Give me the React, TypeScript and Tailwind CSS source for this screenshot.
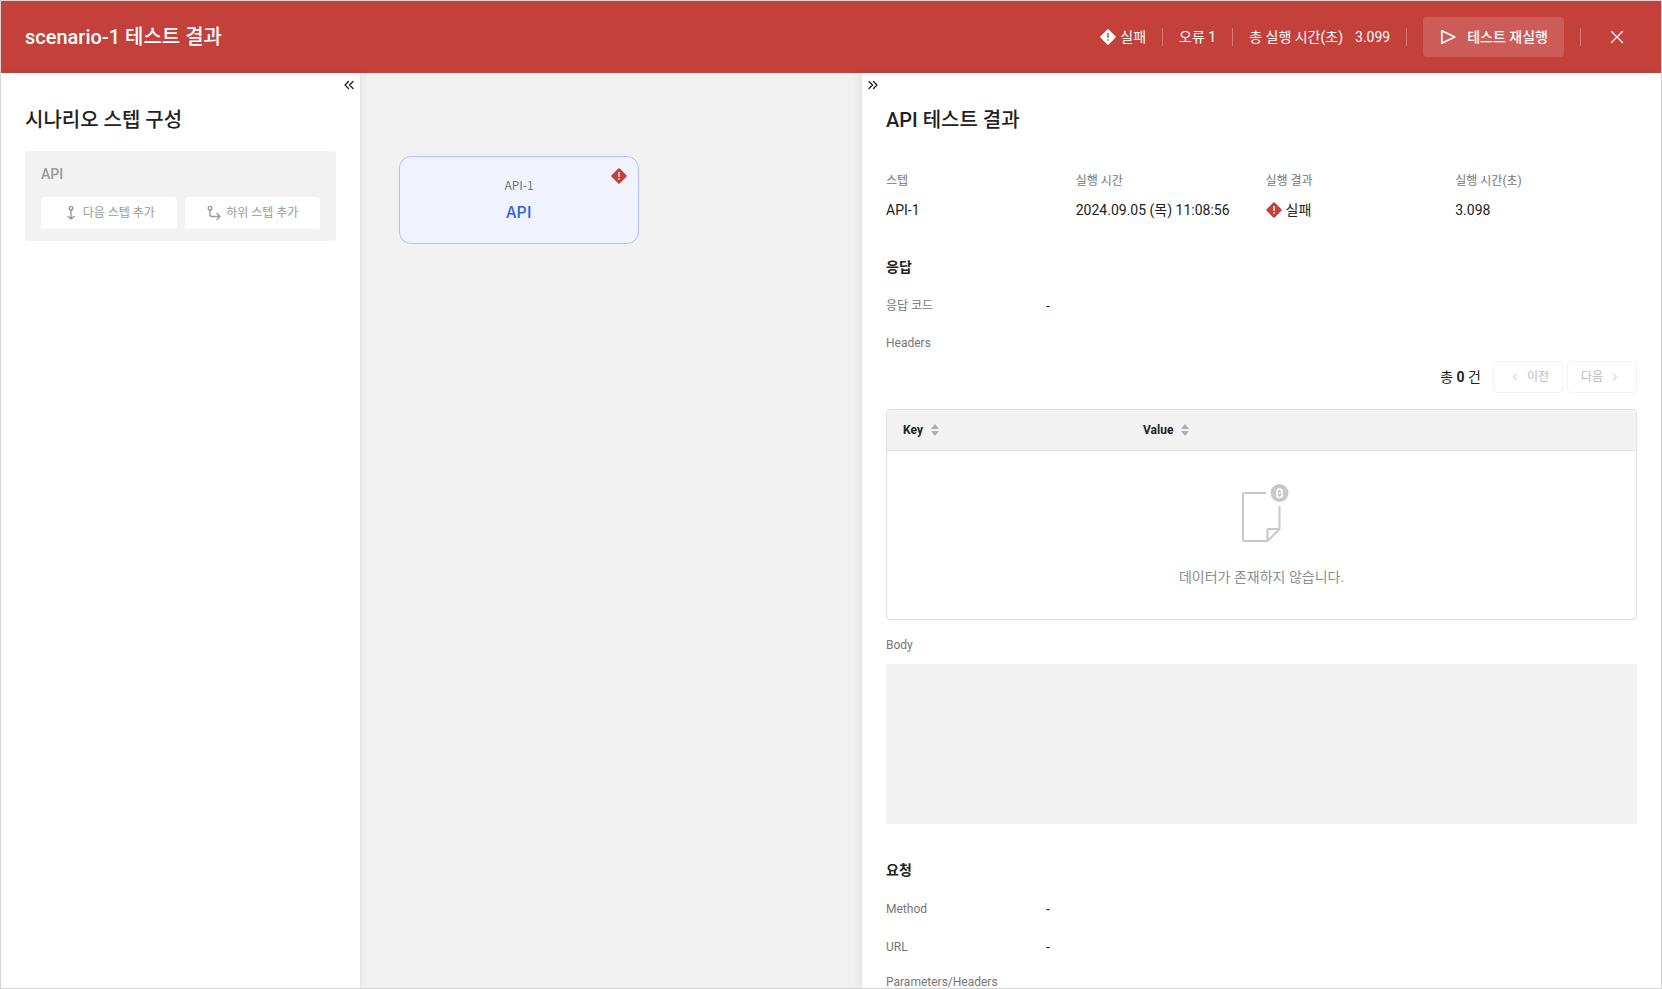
import type { ReactNode } from "react";

function ErrorIcon({ className }: { className: string }) {
  return (
    <svg viewBox="0 0 16 16" className={className} aria-hidden="true">
      <path
        fill="currentColor"
        fillRule="evenodd"
        d="M7.3.6a1 1 0 0 1 1.4 0l6.7 6.7a1 1 0 0 1 0 1.4l-6.7 6.7a1 1 0 0 1-1.4 0L.6 8.7a1 1 0 0 1 0-1.4ZM7.3 4v5h1.4V4Zm0 6.2v1.5h1.4v-1.5Z"
      />
    </svg>
  );
}

function Stroke({ d, className, width = 1.4, children }: { d: string; className: string; width?: number; children?: ReactNode }) {
  return (
    <svg
      viewBox="0 0 16 16"
      className={className}
      fill="none"
      stroke="currentColor"
      strokeWidth={width}
      strokeLinecap="round"
      strokeLinejoin="round"
      aria-hidden="true"
    >
      <path d={d} />
      {children}
    </svg>
  );
}

function SortIcon() {
  return (
    <svg viewBox="0 0 8 12" className="h-3 w-2 text-[#b0b0b0]" fill="currentColor" aria-hidden="true">
      <path d="M4 0l4 5H0ZM4 12L0 7h8Z" />
    </svg>
  );
}

function EmptyIcon() {
  return (
    <svg viewBox="-6 0 54 60" className="h-15 w-[54px]" fill="none" aria-hidden="true">
      <path
        d="M25 10H3a1 1 0 0 0-1 1v46a1 1 0 0 0 1 1h23.500L38.500 46V23M26.500 58V46h12"
        stroke="#c8c8c8"
        strokeWidth="2"
        strokeLinejoin="round"
      />
      <circle cx="38.500" cy="10" r="9" fill="#c8c8c8" />
      <rect x="36" y="6" width="5" height="8.500" rx="2.400" stroke="#fff" strokeWidth="1.700" />
      <path d="M37.500 11.500l2-3" stroke="#fff" strokeWidth="1" />
    </svg>
  );
}

function Divider() {
  return <span className="h-[18px] w-px bg-white/30" />;
}

function Field({ label, children }: { label: string; children: ReactNode }) {
  return (
    <div className="flex flex-col gap-2">
      <dt className="text-xs leading-5 text-[#767676]">{label}</dt>
      <dd className="flex items-center gap-1 text-sm leading-[22px]">{children}</dd>
    </div>
  );
}

function Row({ label, value }: { label: string; value: string }) {
  return (
    <div className="flex h-[26px] items-center">
      <dt className="w-40 text-xs text-[#767676]">{label}</dt>
      <dd className="text-sm">{value}</dd>
    </div>
  );
}

const stepButton =
  "flex h-8 flex-1 items-center justify-center gap-1 rounded bg-white text-xs text-[#999]";
const pageButton =
  "flex h-8 w-[70px] items-center justify-center gap-1 rounded border border-[#f2f2f2] bg-white text-xs text-[#bbb]";

export default function App() {
  return (
    <div className="flex h-screen flex-col overflow-hidden border border-[#d4d4d4] bg-white font-[Roboto,'Noto_Sans_CJK_KR',sans-serif] text-[#222]">
      <header className="flex h-18 shrink-0 items-center justify-between bg-[#c4403b] px-6 text-white">
        <h1 className="text-xl font-medium">scenario-1 테스트 결과</h1>
        <div className="flex items-center gap-4 text-sm">
          <span className="flex items-center gap-1">
            <ErrorIcon className="size-4" />
            실패
          </span>
          <Divider />
          <span>오류 1</span>
          <Divider />
          <span className="flex gap-3">
            <span>총 실행 시간(초)</span>
            <span>3.099</span>
          </span>
          <Divider />
          <button type="button" className="flex h-10 items-center gap-2.5 rounded bg-white/15 px-4 font-medium">
            <Stroke className="size-[18px]" width={1.5} d="M2.500 2.500v11L14 8Z" />
            테스트 재실행
          </button>
          <Divider />
          <button type="button" aria-label="닫기" className="flex size-10 items-center justify-center">
            <Stroke className="size-4" width={1.2} d="M2.500 2.500l11 11M13.500 2.500l-11 11" />
          </button>
        </div>
      </header>

      <div className="flex min-h-0 flex-1">
        <aside className="z-10 flex w-[360px] shrink-0 flex-col border-r border-[#e5e5e5] bg-white shadow-[2px_0_8px_rgba(0,0,0,0.05)]">
          <div className="flex h-6 justify-end pr-[3px]">
            <button type="button" aria-label="접기" className="flex items-center">
              <Stroke className="size-4" d="M7.500 4.500L4 8l3.500 3.500M12 4.500L8.500 8l3.500 3.500" />
            </button>
          </div>
          <div className="px-6 pt-2">
            <h2 className="text-xl leading-[30px] font-medium">시나리오 스텝 구성</h2>
            <section className="mt-4 rounded bg-[#f2f2f2] px-4 pt-3 pb-3">
              <h3 className="text-sm leading-[22px] font-medium text-[#999]">API</h3>
              <div className="mt-3 flex gap-2">
                <button type="button" className={stepButton}>
                  <Stroke className="size-4" d="M8 5v9M5 11.500l3 2.500 3-2.500">
                    <circle cx="8" cy="3.200" r="1.800" />
                  </Stroke>
                  다음 스텝 추가
                </button>
                <button type="button" className={stepButton}>
                  <Stroke className="size-4" d="M4 5v4.500a2 2 0 0 0 2 2h7.500M11 8.500l3 3-3 3">
                    <circle cx="4" cy="3.200" r="1.800" />
                  </Stroke>
                  하위 스텝 추가
                </button>
              </div>
            </section>
          </div>
        </aside>

        <main className="relative min-w-0 flex-1 bg-[#f1f1f1]">
          <div className="absolute top-[83px] left-[38px] flex h-[88px] w-60 flex-col items-center justify-center gap-1 rounded-xl border border-[#b3c0ff] bg-[#f0f3fd] pb-0.5 font-['Noto_Sans_CJK_KR',sans-serif]">
            <span className="text-xs leading-5 text-[#767676]">API-1</span>
            <span className="text-base leading-6 font-medium text-[#2f5fe6]">API</span>
            <ErrorIcon className="absolute top-[11px] right-[11px] size-4 text-[#c4403b]" />
          </div>
        </main>

        <aside className="z-10 flex w-[800px] shrink-0 flex-col overflow-y-auto border-l border-[#e5e5e5] bg-white shadow-[-2px_0_8px_rgba(0,0,0,0.06)] [scrollbar-width:none]">
          <div className="flex h-6 shrink-0 pl-[3px]">
            <button type="button" aria-label="접기" className="flex items-center">
              <Stroke className="size-4" d="M4 4.500l3.500 3.500L4 11.500M8.500 4.500L12 8l-3.500 3.500" />
            </button>
          </div>
          <div className="px-6 pt-2 pb-6">
            <h2 className="text-xl leading-[30px] font-medium">API 테스트 결과</h2>
            <dl className="mt-9 grid grid-cols-4 gap-2">
              <Field label="스텝">API-1</Field>
              <Field label="실행 시간">2024.09.05 (목) 11:08:56</Field>
              <Field label="실행 결과">
                <ErrorIcon className="size-4 text-[#c4403b]" />
                실패
              </Field>
              <Field label="실행 시간(초)">3.098</Field>
            </dl>

            <h3 className="mt-9 text-sm leading-5 font-bold">응답</h3>
            <dl className="mt-4">
              <Row label="응답 코드" value="-" />
            </dl>
            <h4 className="mt-[14px] text-xs leading-5 text-[#767676]">Headers</h4>
            <div className="mt-2 flex items-center justify-end gap-1">
              <span className="mr-2 text-sm">
                총 <b>0</b> 건
              </span>
              <button type="button" className={pageButton}>
                <Stroke className="size-4" width={1} d="M9.500 5l-3 3 3 3" />
                이전
              </button>
              <button type="button" className={pageButton}>
                다음
                <Stroke className="size-4" width={1} d="M6.500 5l3 3-3 3" />
              </button>
            </div>

            <div className="mt-4 overflow-hidden rounded border border-[#e0e0e0]">
              <table className="w-full table-fixed text-xs">
                <thead>
                  <tr className="h-10 border-b border-[#e0e0e0] bg-[#f2f2f2] text-left">
                    <th className="w-60 px-4 font-bold">
                      <span className="flex items-center gap-2">Key <SortIcon /></span>
                    </th>
                    <th className="px-4 font-bold">
                      <span className="flex items-center gap-2">Value <SortIcon /></span>
                    </th>
                  </tr>
                </thead>
                <tbody>
                  <tr>
                    <td colSpan={2} className="h-[169px]">
                      <div className="flex flex-col items-center gap-6 text-sm leading-5 text-[#8c8c8c]">
                        <EmptyIcon />
                        데이터가 존재하지 않습니다.
                      </div>
                    </td>
                  </tr>
                </tbody>
              </table>
            </div>

            <label htmlFor="response-body" className="mt-[14px] block text-xs leading-[22px] text-[#767676]">
              Body
            </label>
            <textarea id="response-body" readOnly className="mt-2 block h-40 w-full resize-none bg-[#f2f2f2]" />

            <h3 className="mt-9 text-sm leading-5 font-bold">요청</h3>
            <dl className="mt-4 flex flex-col gap-3">
              <Row label="Method" value="-" />
              <Row label="URL" value="-" />
            </dl>
            <h4 className="mt-3 text-xs leading-5 text-[#767676]">Parameters/Headers</h4>
          </div>
        </aside>
      </div>
    </div>
  );
}
